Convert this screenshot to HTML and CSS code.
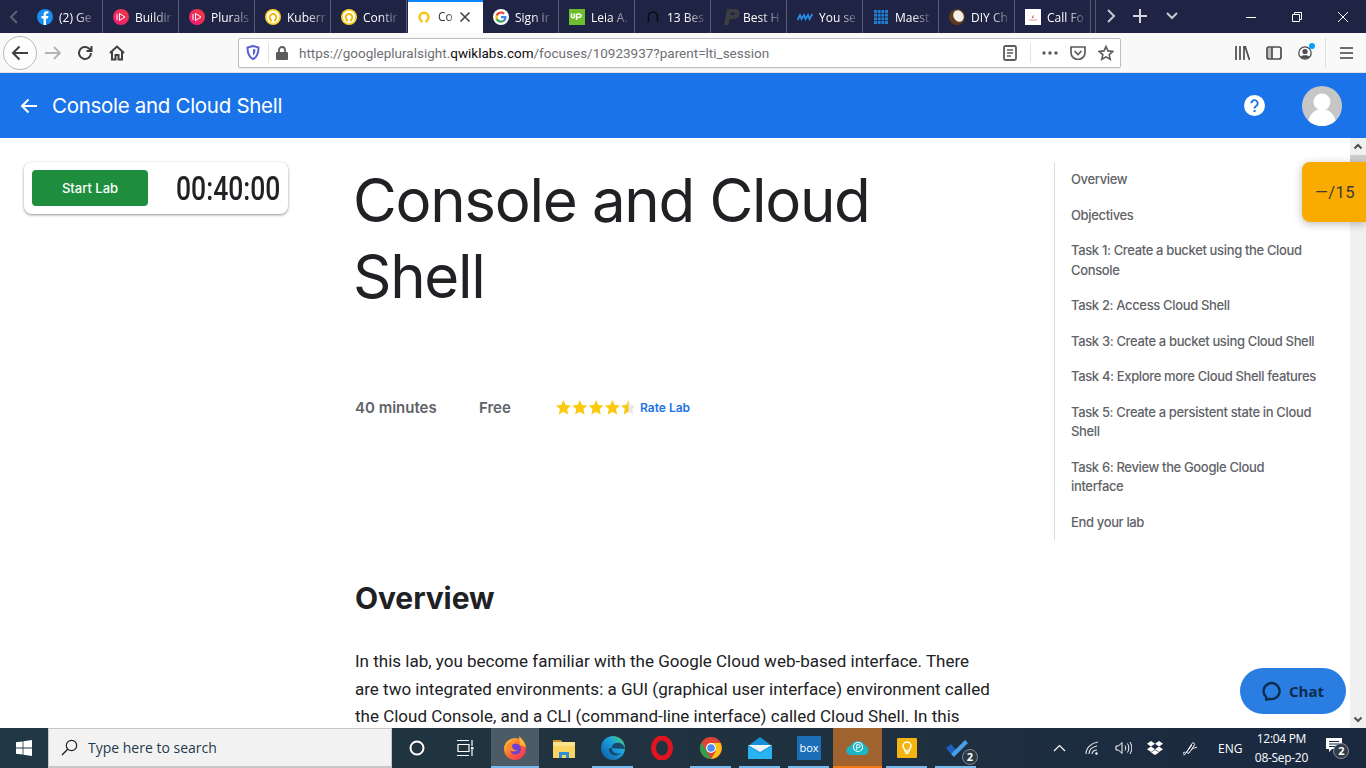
FILE: index.html
```html
<!DOCTYPE html>
<html lang="en">
<head>
<meta charset="utf-8">
<title>Console and Cloud Shell</title>
<link rel="stylesheet" href="styles.css">
</head>
<body>
<div class="tabbar">
  <div class="tab-scroll"><svg width="10" height="16" viewBox="0 0 10 16"><path d="M8 2 2 8l6 6" fill="none" stroke="#5d6074" stroke-width="2.2"/></svg></div>
  <div class="tab"><svg class="fav" viewBox="0 0 16 16"><circle cx="8" cy="8" r="8" fill="#1a8cf0"/><path d="M9 16V9.500h2l.4-2.400H9V5.800c0-.8.300-1.200 1.200-1.200h1.200V2.500C11 2.400 10.300 2.300 9.700 2.300 7.800 2.300 6.600 3.500 6.600 5.500v1.600H4.500v2.400h2.100V16z" fill="#fff"/></svg><span class="tab-text">(2) Ge</span></div>
  <div class="tab"><svg class="fav" viewBox="0 0 16 16"><defs><linearGradient id="ps" x1="0" y1="1" x2="1" y2="0"><stop offset="0" stop-color="#f8177a"/><stop offset="1" stop-color="#e8403e"/></linearGradient></defs><circle cx="8" cy="8" r="8" fill="url(#ps)"/><path d="M6.500 4.500 12 8l-5.500 3.500z M4 5v6" fill="none" stroke="#fff" stroke-width="1"/></svg><span class="tab-text">Buildir</span></div>
  <div class="tab"><svg class="fav" viewBox="0 0 16 16"><circle cx="8" cy="8" r="8" fill="url(#ps)"/><path d="M6.500 4.500 12 8l-5.500 3.500z M4 5v6" fill="none" stroke="#fff" stroke-width="1"/></svg><span class="tab-text">Plurals</span></div>
  <div class="tab"><svg class="fav" viewBox="0 0 16 16"><circle cx="8" cy="8" r="8" fill="#fbd029"/><circle cx="8" cy="8" r="6.200" fill="#fff"/><path d="M6 12.500V11A3.300 3.300 0 1 1 10 11v1.500" fill="none" stroke="#f3b90f" stroke-width="2"/></svg><span class="tab-text">Kuberr</span></div>
  <div class="tab"><svg class="fav" viewBox="0 0 16 16"><circle cx="8" cy="8" r="8" fill="#fbd029"/><circle cx="8" cy="8" r="6.200" fill="#fff"/><path d="M6 12.500V11A3.300 3.300 0 1 1 10 11v1.500" fill="none" stroke="#f3b90f" stroke-width="2"/></svg><span class="tab-text">Contir</span></div>
  <div class="tab tab-active"><svg class="fav" viewBox="0 0 16 16"><path d="M5.500 13.500V12A4.500 4.500 0 1 1 10.500 12v1.500" fill="none" stroke="#f5c518" stroke-width="2.400"/></svg><span class="tab-text">Co</span><svg class="tab-close" width="12" height="12" viewBox="0 0 12 12"><path d="m1.500 1.500 9 9m0-9-9 9" stroke="#444" stroke-width="1.600"/></svg></div>
  <div class="tab"><svg class="fav" viewBox="0 0 16 16"><circle cx="8" cy="8" r="8" fill="#fff"/><path d="M13.500 8.200c0-.4 0-.8-.1-1.200H8v2.200h3.100c-.1.700-.5 1.300-1.200 1.700v1.400h1.900c1.100-1 1.700-2.400 1.700-4.100z" fill="#4285f4"/><path d="M8 13.700c1.500 0 2.800-.5 3.800-1.400L9.900 10.900c-.5.400-1.200.6-1.900.6-1.500 0-2.700-1-3.200-2.300H2.900v1.500c1 1.800 2.900 3 5.100 3z" fill="#34a853"/><path d="M4.800 9.200c-.2-.7-.2-1.500 0-2.200V5.500H2.900c-.8 1.600-.8 3.600 0 5.200z" fill="#fbbc05"/><path d="M8 4.600c.8 0 1.600.3 2.200.9l1.600-1.600C10.800 2.900 9.400 2.400 8 2.400c-2.200 0-4.100 1.200-5.100 3.100l1.900 1.500C5.300 5.600 6.500 4.600 8 4.600z" fill="#ea4335"/></svg><span class="tab-text">Sign ir</span></div>
  <div class="tab"><svg class="fav" viewBox="0 0 16 16"><rect width="16" height="16" fill="#6fbe2e"/><path d="M2.500 4.500v3.200c0 1.400 2.800 1.400 2.800 0V4.500M7.500 11V5.500c2.800-1.400 4.500 0 4.500 1.300 0 1.500-2.500 2-4.500 1.200" fill="none" stroke="#fff" stroke-width="1.500"/></svg><span class="tab-text">Leia A.</span></div>
  <div class="tab"><svg class="fav" viewBox="0 0 16 16"><path d="M3.500 13V7.500a4.500 4.500 0 0 1 9 0V13" fill="none" stroke="#0c0c14" stroke-width="1.600"/></svg><span class="tab-text">13 Bes</span></div>
  <div class="tab"><svg class="fav fav-wide" viewBox="0 0 20 18"><path d="M4 17 7 1h8c3.500 0 5 2 4.500 5C19 9.500 16.500 11 13.500 11H9.500l-1 6zM10.300 7h3c1 0 1.700-.5 1.800-1.300.1-.7-.4-1-1.200-1h-3z" fill="#3e3d3f" fill-rule="evenodd"/></svg><span class="tab-text">Best H</span></div>
  <div class="tab"><svg class="fav" viewBox="0 0 16 16"><path d="M.5 11 3 6l1.500 4L7 6l1.500 4L11 6l1.500 4L15.500 5" fill="none" stroke="#2a8fe8" stroke-width="1.700"/></svg><span class="tab-text">You se</span></div>
  <div class="tab"><svg class="fav" viewBox="0 0 16 16"><path d="M1 1h14v14H1z" fill="#1f7fd0"/><path d="M4.500 1v14M8 1v14M11.500 1v14M1 4.500h14M1 8h14M1 11.500h14" stroke="#1f2344" stroke-width=".8"/></svg><span class="tab-text">Maest</span></div>
  <div class="tab"><svg class="fav" viewBox="0 0 16 16"><circle cx="8" cy="8" r="8" fill="#5c3a1e"/><ellipse cx="9.500" cy="7" rx="5" ry="6" fill="#f4efe4" transform="rotate(-30 9.500 7)"/></svg><span class="tab-text">DIY Ch</span></div>
  <div class="tab"><svg class="fav" viewBox="0 0 16 16"><rect width="16" height="16" fill="#fff"/><path d="M6.500 9 9 5.500l-.8 3.500z" fill="#c8402a"/><rect x="4" y="10.500" width="8" height="1" fill="#d8a090"/></svg><span class="tab-text">Call Fo</span></div>
  <div class="tab-controls">
    <svg width="10" height="16" viewBox="0 0 10 16"><path d="m2 2 6 6-6 6" fill="none" stroke="#c8c9d2" stroke-width="2"/></svg>
    <svg width="14" height="14" viewBox="0 0 14 14"><path d="M7 0v14M0 7h14" stroke="#d4d5dc" stroke-width="2"/></svg>
    <svg class="tabs-menu" width="12" height="8" viewBox="0 0 12 8"><path d="m1 1 5 5 5-5" fill="none" stroke="#c8c9d2" stroke-width="2"/></svg>
  </div>
  <div class="win-controls">
    <svg width="10" height="10" viewBox="0 0 10 10"><path d="M0 5.500h10" stroke="#fff"/></svg>
    <svg width="10" height="10" viewBox="0 0 10 10"><path d="M.5 2.500h7v7h-7zM2.500 2.500v-2h7v7h-2" fill="none" stroke="#fff"/></svg>
    <svg width="10" height="10" viewBox="0 0 10 10"><path d="m0 0 10 10M10 0 0 10" stroke="#fff"/></svg>
  </div>
</div>

<div class="navbar">
  <div class="back-btn"><svg width="18" height="16" viewBox="0 0 18 16"><path d="M17 8H2m6.500-6.500L2 8l6.500 6.500" fill="none" stroke="#3f3f42" stroke-width="2"/></svg></div>
  <svg class="nav-icon" width="16" height="14" viewBox="0 0 16 14"><path d="M0 7h15M9 1l6 6-6 6" fill="none" stroke="#b3b3b5" stroke-width="1.800"/></svg>
  <svg class="nav-icon" width="16" height="16" viewBox="0 0 16 16"><path d="M14 8a6 6 0 1 1-2-4.500L14 5.500M14.500 1v5h-5" fill="none" stroke="#3f3f42" stroke-width="2"/></svg>
  <svg class="nav-icon" width="16" height="16" viewBox="0 0 16 16"><path d="M1 8 8 1.500 15 8M3 7v7.500h3.500V10h3v4.500H13V7" fill="none" stroke="#3f3f42" stroke-width="2"/></svg>
  <div class="urlbar">
    <svg class="url-shield" width="14" height="15" viewBox="0 0 14 15"><path d="M7 1 1.500 2.500c0 6 1 9.500 5.500 11.500 4.500-2 5.500-5.500 5.500-11.500z" fill="none" stroke="#5a5fd8" stroke-width="2"/><path d="M7 4v6.500c1.500-1 2.500-3 2.500-6z" fill="#5a5fd8"/></svg>
    <span class="url-sep"></span>
    <svg class="url-lock" width="12" height="14" viewBox="0 0 12 14"><path d="M3 6V4a3 3 0 0 1 6 0v2" fill="none" stroke="#5b5b5e" stroke-width="1.800"/><rect y="6" width="12" height="8" rx="1" fill="#5b5b5e"/></svg>
    <span class="url-text">https://googlepluralsight.<b>qwiklabs.com</b>/focuses/10923937?parent=lti_session</span>
    <svg class="url-reader" width="14" height="16" viewBox="0 0 14 16"><rect x="1" y="1" width="12" height="14" rx="1.500" fill="none" stroke="#5b5b5e" stroke-width="1.800"/><path d="M4 5h6M4 8h6M4 11h4" stroke="#5b5b5e" stroke-width="1.300"/></svg>
    <span class="url-sep url-sep-right"></span>
    <svg class="url-dots" width="16" height="4" viewBox="0 0 16 4"><circle cx="2" cy="2" r="1.700" fill="#5b5b5e"/><circle cx="8" cy="2" r="1.700" fill="#5b5b5e"/><circle cx="14" cy="2" r="1.700" fill="#5b5b5e"/></svg>
    <svg class="url-pocket" width="16" height="14" viewBox="0 0 16 14"><path d="M1 1h14v5.500a7 7 0 0 1-14 0z" fill="none" stroke="#5b5b5e" stroke-width="1.700"/><path d="m4.500 5 3.500 3.500L11.500 5" fill="none" stroke="#5b5b5e" stroke-width="1.700"/></svg>
    <svg width="16" height="16" viewBox="0 0 16 16"><path d="m8 1.500 2 4.400 4.800.5-3.600 3.200 1 4.700L8 11.900l-4.200 2.400 1-4.700L1.200 6.400 6 5.900z" fill="none" stroke="#5b5b5e" stroke-width="1.600"/></svg>
  </div>
  <div class="nav-right">
    <svg width="15" height="14" viewBox="0 0 15 14"><path d="M1 0v14M5 0v14M9 0v14M10 0l4.500 14" fill="none" stroke="#4d4d50" stroke-width="1.700"/></svg>
    <svg width="16" height="14" viewBox="0 0 16 14"><rect x="1" y="1" width="14" height="12" rx="2" fill="none" stroke="#4d4d50" stroke-width="1.700"/><path d="M6 1v12" stroke="#4d4d50" stroke-width="1.700"/><path d="M2 2h4v10H2z" fill="#4d4d50" opacity=".35"/></svg>
    <span class="account"><svg width="14" height="14" viewBox="0 0 14 14"><circle cx="7" cy="7" r="6.200" fill="none" stroke="#4d4d50" stroke-width="1.300"/><circle cx="7" cy="5.500" r="2.600" fill="#4d4d50"/><path d="M2.500 11c1-2.500 8-2.500 9 0-2 2.300-7 2.300-9 0z" fill="#4d4d50"/></svg><i class="account-dot"></i></span>
    <span class="nav-right-sep"></span>
    <svg width="13" height="12" viewBox="0 0 13 12"><path d="M0 1h13M0 6h13M0 11h13" stroke="#3f3f42" stroke-width="1.700"/></svg>
  </div>
</div>

<div class="viewport">
  <header class="app-header">
    <svg class="header-back" width="18" height="16" viewBox="0 0 18 16"><path d="M17 8H2m6.500-6.500L2 8l6.500 6.500" fill="none" stroke="#fff" stroke-width="2"/></svg>
    <span class="header-title">Console and Cloud Shell</span>
    <svg class="header-help" width="21" height="21" viewBox="0 0 21 21"><circle cx="10.500" cy="10.500" r="10.500" fill="#fff"/><path d="M7.300 8.300a3.200 3.200 0 1 1 5 2.700c-1 .7-1.800 1.200-1.800 2.600" fill="none" stroke="#1a73e8" stroke-width="1.900"/><rect x="9.500" y="15" width="2" height="2" fill="#1a73e8"/></svg>
    <svg class="header-avatar" width="40" height="40" viewBox="0 0 40 40"><defs><clipPath id="av"><circle cx="20" cy="20" r="20"/></clipPath></defs><circle cx="20" cy="20" r="20" fill="#c6c6c6"/><g clip-path="url(#av)" fill="#fff"><circle cx="20" cy="16" r="8.500"/><path d="M6 40c0-11 6-17 14-17s14 6 14 17z"/></g></svg>
  </header>
  <main class="page">
    <aside class="left-col">
      <div class="lab-card">
        <button class="start-btn">Start Lab</button>
        <span class="timer">00:40:00</span>
      </div>
    </aside>
    <article class="content">
      <h1 class="lab-title">Console and Cloud Shell</h1>
      <div class="meta">
        <span class="meta-duration">40 minutes</span>
        <span class="meta-free">Free</span>
        <span class="stars">
          <svg width="78" height="15" viewBox="0 0 78 15"><defs><path id="st" d="m7.500 0 2.200 4.900 5.300.6-3.900 3.600 1.100 5.300-4.700-2.700-4.700 2.700 1.100-5.300L0 5.500l5.300-.6z"/><clipPath id="half"><rect x="65" width="7.500" height="15"/></clipPath></defs><g fill="#fcc90c"><use href="#st"/><use href="#st" x="16.300"/><use href="#st" x="32.600"/><use href="#st" x="48.900"/></g><use href="#st" x="65" fill="#e8e8e8"/><g clip-path="url(#half)"><use href="#st" x="65" fill="#fcc90c"/></g></svg>
          <a class="rate-link">Rate Lab</a>
        </span>
      </div>
      <h2 class="section-title">Overview</h2>
      <p class="body-text">In this lab, you become familiar with the Google Cloud web-based interface. There are two integrated environments: a GUI (graphical user interface) environment called the Cloud Console, and a CLI (command-line interface) called Cloud Shell. In this</p>
    </article>
    <nav class="toc">
      <a>Overview</a>
      <a>Objectives</a>
      <a>Task 1: Create a bucket using the Cloud Console</a>
      <a>Task 2: Access Cloud Shell</a>
      <a>Task 3: Create a bucket using Cloud Shell</a>
      <a>Task 4: Explore more Cloud Shell features</a>
      <a>Task 5: Create a persistent state in Cloud Shell</a>
      <a>Task 6: Review the Google Cloud interface</a>
      <a>End your lab</a>
    </nav>
    <div class="scrollbar">
      <svg width="16" height="17" viewBox="0 0 16 17"><path d="m4.500 10.500 3.500-3.500 3.500 3.500" fill="none" stroke="#505050" stroke-width="2"/></svg>
      <div class="scroll-track"><div class="scroll-thumb"></div></div>
      <svg width="16" height="17" viewBox="0 0 16 17"><path d="m4.500 6.500 3.500 3.500 3.500-3.500" fill="none" stroke="#505050" stroke-width="2"/></svg>
    </div>
    <div class="score">—/15</div>
    <div class="chat"><svg width="20" height="20" viewBox="0 0 20 20"><path d="M4 18.500c.3-1 .3-2 0-2.700A8 8 0 1 1 7.500 17.800c-1.100.7-2.300.9-3.500.7z" fill="none" stroke="#0d2b4d" stroke-width="2.300" stroke-linejoin="round"/></svg><span>Chat</span></div>
  </main>
</div>

<footer class="taskbar">
  <div class="start-win"><svg width="16" height="16" viewBox="0 0 16 16"><path d="M0 2.300 6.600 1.400v6.200H0zM7.400 1.300 16 0v7.600H7.400zM0 8.400h6.600v6.200L0 13.700zM7.400 8.400H16V16l-8.600-1.300z" fill="#fff"/></svg></div>
  <div class="search-box"><svg width="17" height="17" viewBox="0 0 17 17"><circle cx="10.500" cy="6.500" r="5.200" fill="none" stroke="#222" stroke-width="1.200"/><path d="M6.700 10.300 1 16" stroke="#222" stroke-width="1.400"/></svg><span>Type here to search</span></div>
  <div class="task-item task-plain"><svg width="16" height="16" viewBox="0 0 16 16"><circle cx="8" cy="8" r="6.500" fill="none" stroke="#fff" stroke-width="2"/></svg></div>
  <div class="task-item task-plain task-view"><svg width="18" height="16" viewBox="0 0 18 16"><path d="M0 .5h12M0 15.500h12M1 4.500h11v7H1zM15 0v6M15 10v6" fill="none" stroke="#fff" stroke-width="1.200"/><rect x="14" y="7" width="2.500" height="2.500" fill="#fff"/></svg></div>
  <div class="task-item task-active running"><svg width="24" height="24" viewBox="0 0 24 24"><defs><linearGradient id="ff" x1="0" y1="0" x2="1" y2="1"><stop offset="0" stop-color="#ffd23d"/><stop offset=".5" stop-color="#ff6a2f"/><stop offset="1" stop-color="#f0226c"/></linearGradient></defs><circle cx="12" cy="13" r="11" fill="url(#ff)"/><path d="M16 0c3 3 6 6 7 11l-6-2z" fill="#ffb52e"/><circle cx="12.500" cy="13" r="5.500" fill="#7040d0"/><path d="M4 9c2-3 6-4 8-2-2 0-3 1-3 3 0 3 3 5 6 4-2 2-8 2-10-1z" fill="#ff8a2a"/></svg></div>
  <div class="task-item"><svg width="22" height="20" viewBox="0 0 22 20"><path d="M0 2h8l2 3H0z" fill="#c9962c"/><rect y="4" width="22" height="16" fill="#fbd561"/><rect x="0" y="4" width="22" height="4" fill="#fce28c"/><path d="M6 20v-6h10v6h-3v-3H9v3z" fill="#2d8fd8"/></svg></div>
  <div class="task-item running"><svg width="24" height="24" viewBox="0 0 24 24"><defs><linearGradient id="ed" x1="0" y1="1" x2="1" y2="0"><stop offset="0" stop-color="#0c59a4"/><stop offset=".6" stop-color="#1ba0dc"/><stop offset="1" stop-color="#54d36a"/></linearGradient></defs><circle cx="12" cy="12" r="12" fill="url(#ed)"/><path d="M24 13c-1-5-5-7-9-6-3 .7-5 3.500-4 7 1 3 5 5 9 3-3 4-10 3-12-2 0-1 0-2 .500-3" fill="#173a5c" opacity=".85"/></svg></div>
  <div class="task-item"><svg width="22" height="24" viewBox="0 0 22 24"><ellipse cx="11" cy="12" rx="8.500" ry="10" fill="none" stroke="#e0141f" stroke-width="5"/></svg></div>
  <div class="task-item running"><svg width="22" height="22" viewBox="0 0 22 22"><circle cx="11" cy="11" r="11" fill="#dd4436"/><path d="M11 22A11 11 0 0 1 1.500 5.500L7 15z" fill="#2e9f4c"/><path d="M11 6h9.500A11 11 0 0 1 11 22l5-8z" fill="#fbc318"/><circle cx="11" cy="11" r="5" fill="#fff"/><circle cx="11" cy="11" r="3.800" fill="#4a8df5"/></svg></div>
  <div class="task-item running"><svg width="24" height="22" viewBox="0 0 24 22"><path d="M0 9 12 0l12 9v13H0z" fill="#1890d8"/><path d="M0 8h24L12 15z" fill="#f0f6fb"/><path d="M0 9l12 7 12-7v13H0z" fill="#29b3f0"/></svg></div>
  <div class="task-item running"><svg width="24" height="24" viewBox="0 0 24 24"><rect width="24" height="24" fill="#1b6fb8"/><text x="12" y="16" class="box-logo" text-anchor="middle">box</text></svg></div>
  <div class="task-item task-orange"><svg width="24" height="16" viewBox="0 0 24 16"><path d="M5 16a4.500 4.500 0 0 1-.5-9A8 8 0 0 1 19 6.500a5 5 0 0 1 0 9.500z" fill="#1db5c4"/><circle cx="12" cy="8" r="4.500" fill="none" stroke="#fff" stroke-width="1.200"/><path d="M10.700 11V5.700h1.800a1.500 1.500 0 0 1 0 3h-1.800" fill="none" stroke="#fff"/></svg></div>
  <div class="task-item running"><svg width="22" height="22" viewBox="0 0 22 22"><rect x="1" y="1" width="20" height="20" rx="1" fill="#f5b50f"/><path d="M7 9a4 4 0 1 1 8 0c0 2-2 3-2 5H9c0-2-2-3-2-5zM9 16h4" fill="none" stroke="#fff" stroke-width="1.500"/></svg></div>
  <div class="task-item running"><svg width="24" height="22" viewBox="0 0 24 22"><path d="M2 11l5-4 5 6-5 4z" fill="#1f5fc0"/><path d="M7 17 21 3l3 3L10 20z" fill="#4a9ee8"/></svg><i class="task-badge">2</i></div>
  <div class="tray">
    <svg width="13" height="8" viewBox="0 0 13 8"><path d="m1 7 5.500-5.500L12 7" fill="none" stroke="#fff" stroke-width="1.200"/></svg>
    <svg class="tray-wifi" width="14" height="14" viewBox="0 0 14 14"><path d="M1 13C1 7 6 2 13 1M4 13c0-4 3-7 8-8M7 13c0-2 2-4 5-4" fill="none" stroke="#e2e5e8" stroke-width="1.100"/><circle cx="11.500" cy="12.500" r="1.200" fill="#fff"/></svg>
    <svg class="tray-vol" width="17" height="14" viewBox="0 0 17 14"><path d="M1 5v4h2.500L7 12.500v-11L3.500 5zM10 4.500c1 1.500 1 3.500 0 5M12.500 2.500c1.800 3 1.800 6 0 9M15 1c2.300 4 2.300 8 0 12" fill="none" stroke="#fff"/></svg>
    <svg class="tray-drop" width="16" height="14" viewBox="0 0 16 14"><path d="M4 0 0 2.800l4 2.700 4-2.700zM12 0 8 2.800l4 2.700 4-2.700zM4 5.500 0 8.200l4 2.700 4-2.700zM12 5.500 8 8.200l4 2.700 4-2.700zM4 11.500 8 14l4-2.500L8 9z" fill="#fff"/></svg>
    <svg class="tray-pen" width="16" height="16" viewBox="0 0 16 16"><path d="M1.500 15c2 0 2.500-2 1-3-1 0-1.500 1.500-.5 2M4 13 10 3.500c1-1.500 3.500 0 2.500 1.500L7 13c-1 1-2.500 0-2-1.500L10 5M10 9c2-1.500 4-1 5-2" fill="none" stroke="#fff"/></svg>
    <span class="tray-lang">ENG</span>
    <div class="clock"><span>12:04 PM</span><span>08-Sep-20</span></div>
    <div class="notify"><svg width="16" height="14" viewBox="0 0 16 14"><path d="M0 0h16v11H6l-3 3v-3H0z" fill="#fff"/><path d="M3 3.500h10M3 6h10M3 8.500h7" stroke="#1a2a40"/></svg><i class="notify-badge">2</i></div>
  </div>
</footer>
</body>
</html>
```

FILE: styles.css
```css
* { box-sizing: border-box; }
html, body { margin: 0; padding: 0; }
body { width: 1366px; height: 768px; overflow: hidden; display: flex; flex-direction: column; font-family: "Roboto", sans-serif; background: #fff; }
svg { flex: none; display: block; }

.tabbar { height: 33px; background: #1f2344; display: flex; align-items: stretch; color: #fff; }
.tab-scroll { width: 27px; display: flex; align-items: center; justify-content: center; padding-left: 1px; }
.tab { width: 76px; display: flex; align-items: center; padding: 1px 9px 0 10px; border-right: 1px solid #55586f; font: 12px "Open Sans", sans-serif; white-space: nowrap; }
.fav { width: 16px; height: 16px; margin-right: 6px; }
.fav-wide { width: 20px; height: 18px; margin-left: -1px; margin-right: 3px; }
.tab-text { flex: 1; -webkit-mask-image: linear-gradient(to right, #000 50%, rgba(0,0,0,.2) 100%); mask-image: linear-gradient(to right, #000 50%, rgba(0,0,0,.2) 100%); }
.tab-active { background: #fff; color: #333; border-right: 0; border-top: 2px solid #0a84ff; padding: 0 12px 2px 8px; width: 75px; margin-left: 1px; }
.tab-close { margin-left: 2px; }
.tab-controls { flex: 1; display: flex; align-items: center; padding: 0 0 1px 10px; gap: 17px; border-left: 1px solid #55586f; margin-left: 4px; }
.tabs-menu { margin-left: 2px; }
.win-controls { display: flex; align-items: center; gap: 36px; padding: 0 18px 0 0; }

.navbar { height: 40px; background: #f9f9fa; display: flex; align-items: center; padding: 0 0 0 3px; border-bottom: 1px solid #e4e4e6; }
.back-btn { width: 34px; height: 34px; border: 1px solid #b8b8ba; border-radius: 50%; display: flex; align-items: center; justify-content: center; background: #fdfdfd; margin-right: 8px; }
.nav-icon { margin-right: 16px; }
.urlbar { width: 883px; height: 30px; margin-left: 97px; background: #fff; border: 1px solid #bdbdbf; border-radius: 2px; display: flex; align-items: center; gap: 8px; padding: 0 6px 0 7px; box-shadow: 0 1px 1px rgba(0,0,0,.06); }
.url-sep { width: 1px; height: 20px; background: #e2e2e4; }
.url-lock { margin-left: -1px; }
.url-text { flex: 1; font: 13.500px "Roboto", sans-serif; color: #6f6f73; padding-top: 1px; margin-left: 3px; white-space: nowrap; }
.url-text b { font-weight: 400; color: #0c0c0d; }
.url-sep-right { margin: 0 3px 0 5px; }
.url-dots { margin-right: 4px; }
.url-pocket { margin-right: 4px; }
.nav-right { flex: 1; display: flex; align-items: center; gap: 16px; padding-left: 114px; }
.account { position: relative; display: block; }
.account-dot { position: absolute; top: -3px; right: -3px; width: 6px; height: 6px; border-radius: 50%; background: #0a9bff; }
.nav-right-sep { width: 1px; height: 30px; background: #e0e0e2; margin: 0 -2px 0 -3px; }

.viewport { flex: 1; min-height: 0; display: flex; flex-direction: column; }
.app-header { height: 65px; background: #1a73e8; display: flex; align-items: center; padding: 0 24px 0 20px; color: #fff; }
.header-back { margin-right: 14px; }
.header-title { flex: 1; font: 400 20.500px "Inter", sans-serif; letter-spacing: -.3px; }
.header-help { margin-right: 37px; }

.page { position: relative; flex: 1; min-height: 0; display: flex; overflow: hidden; }
.left-col { width: 355px; padding: 24px 0 0 24px; flex: none; }
.lab-card { width: 264px; height: 52px; display: flex; align-items: center; padding: 0 0 0 8px; border-radius: 8px; background: #fff; box-shadow: 0 1px 2px rgba(60,64,67,.4), 0 1px 3px 1px rgba(60,64,67,.15); }
.start-btn { flex: none; width: 116px; height: 36px; border: 0; border-radius: 4px; background: #1e8e3e; color: #fff; font: 500 13px "Inter", sans-serif; }
.timer { flex: none; margin-left: 28px; font: 500 34px "Roboto", sans-serif; color: #202124; display: inline-block; transform: scaleX(.78); transform-origin: left center; }
.content { width: 699px; flex: none; padding-right: 59px; }
.lab-title { margin: 24px 0 0 -2px; height: 235px; width: 560px; font: 400 60px/76px "Inter", sans-serif; letter-spacing: -1.3px; color: #202124; }
.meta { display: flex; align-items: center; height: 20px; font: 600 15px "Inter", sans-serif; color: #5f6368; }
.meta-duration { width: 124px; }
.meta-free { width: 77px; }
.stars { display: flex; align-items: center; gap: 6px; }
.rate-link { font: 600 12px "Inter", sans-serif; color: #1a73e8; }
.section-title { margin: 163px 0 0; font: 700 30px/36px "Inter", sans-serif; color: #202124; letter-spacing: -.1px; }
.body-text { margin: 32px 0 0; font: 400 17px/27.500px "Roboto", sans-serif; color: #202124; }
.toc { width: 296px; flex: none; height: 378px; margin-top: 24px; border-left: 1px solid #dadce0; padding: 8px 32px 0 16px; display: flex; flex-direction: column; gap: 16px; font: 500 13px/19.500px "Inter", sans-serif; color: #5f6368; letter-spacing: -.35px; }
.scrollbar { width: 16px; flex: none; background: #f0f0f0; display: flex; flex-direction: column; }
.scroll-track { flex: 1; }
.scroll-thumb { height: 66px; background: #cdcdcd; }
.score { position: absolute; top: 24px; right: 0; width: 64px; height: 60px; padding-left: 13px; display: flex; align-items: center; border-radius: 8px 0 0 8px; background: #f9ab00; color: #3c3c3c; font: 400 16.500px "Roboto", sans-serif; letter-spacing: .4px; box-shadow: 0 2px 8px rgba(60,64,67,.35); }
.chat { position: absolute; top: 530px; right: 20px; width: 106px; height: 46px; border-radius: 23px; background: #2a7de1; display: flex; align-items: center; justify-content: center; gap: 7px; color: #0d2b4d; font: 700 15px "Open Sans", sans-serif; }

.taskbar { height: 40px; background: linear-gradient(90deg, #213743 0, #20343f 35%, #1f3040 65%, #1a2840 100%); display: flex; align-items: stretch; color: #fff; }
.start-win { width: 48px; display: flex; align-items: center; justify-content: center; }
.search-box { width: 344px; background: #f2f2f2; border: 1px solid #c6c6c6; border-bottom-width: 2px; display: flex; align-items: center; gap: 10px; padding: 0 12px; color: #1f3a4d; font: 14px "Open Sans", sans-serif; }
.task-item { position: relative; width: 49px; display: flex; align-items: center; justify-content: center; }
.task-view { width: 50px; }
.running::after { content: ""; position: absolute; left: 4px; right: 4px; bottom: 0; height: 2px; background: #76b9ed; }
.task-active { background: #4b5c66; width: 48px; }
.task-active::after { left: 0; right: 0; }
.task-orange { background: #a0622f; border-bottom: 2px solid #f47b16; }
.box-logo { font: 400 11px "Open Sans", sans-serif; fill: #fff; }
.task-badge { position: absolute; right: 2px; bottom: 3px; width: 16px; height: 16px; border-radius: 50%; background: #2c3a46; border: 1px solid #7f8a92; color: #fff; font: normal 700 11px/14px "Open Sans", sans-serif; text-align: center; }
.tray { flex: 1; display: flex; align-items: center; padding-left: 73px; }
.tray-wifi { margin-left: 19px; }
.tray-vol { margin-left: 16px; }
.tray-drop { margin-left: 15px; }
.tray-pen { margin-left: 19px; }
.tray-lang { margin-left: 20px; font: 12px "Open Sans", sans-serif; }
.clock { width: 70px; margin-left: 4px; display: flex; flex-direction: column; align-items: center; font: 12px/19px "Open Sans", sans-serif; letter-spacing: -.3px; }
.notify { position: relative; margin-left: 10px; padding-bottom: 6px; }
.notify-badge { position: absolute; left: 7px; top: 5px; width: 16px; height: 16px; border-radius: 50%; background: #333c48; border: 1px solid #8a9098; color: #fff; font: normal 700 11px/14px "Open Sans", sans-serif; text-align: center; }
```
